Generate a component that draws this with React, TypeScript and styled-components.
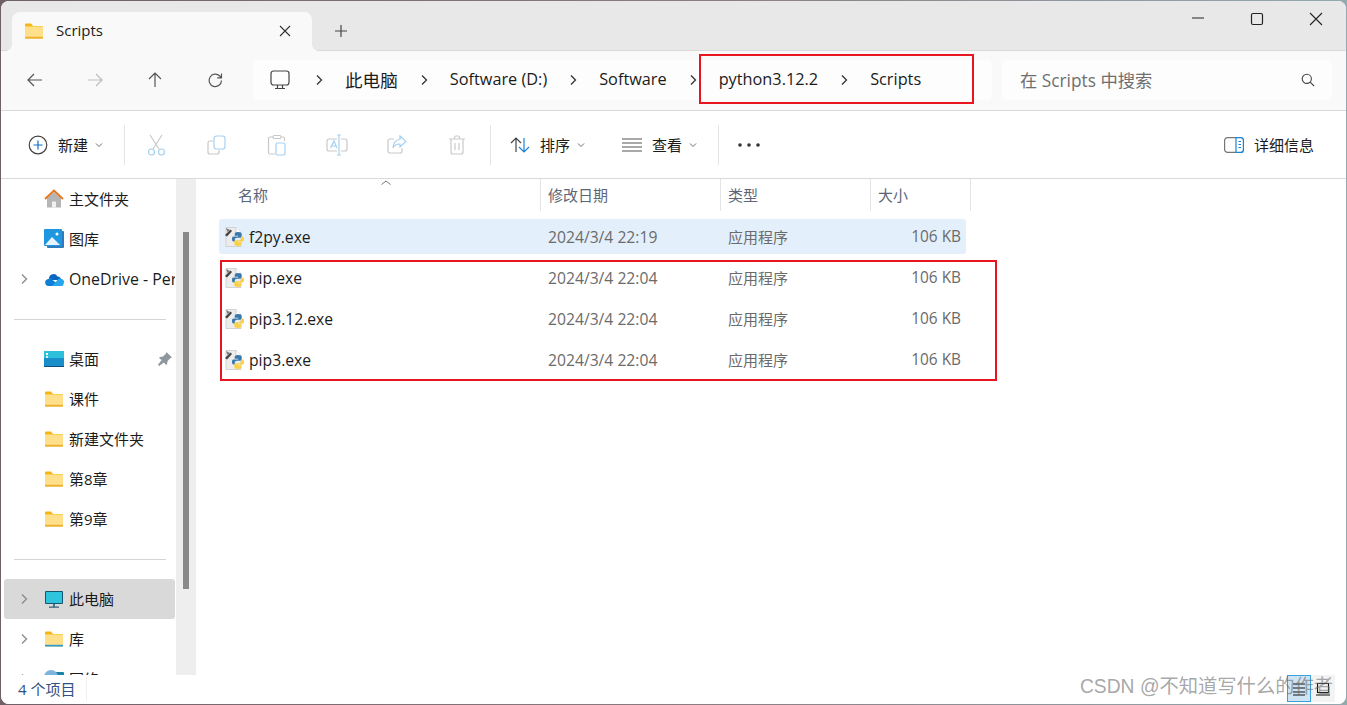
import React from "react";
import styled, { createGlobalStyle } from "styled-components";

const GlobalStyle = createGlobalStyle`
  html, body {
    margin: 0;
    height: 100%;
    overflow: hidden;
  }
  body {
    background: linear-gradient(90deg, #6f5f66 0%, #8a7b80 50%, #93aab0 100%);
    font-family: "Open Sans", "Noto Sans CJK SC", sans-serif;
    color: #1b1b1b;
  }
  * {
    box-sizing: border-box;
  }
`;

const Frame = styled.div`
  position: relative;
  width: 1345px;
  height: 703px;
  margin: 1px;
  display: flex;
  flex-direction: column;
  background: #fff;
  border-radius: 8px;
  overflow: hidden;
`;

/* title bar */
const TitleBar = styled.div`
  height: 50px;
  flex-shrink: 0;
  display: flex;
  align-items: flex-end;
  padding-left: 11px;
  background: #e8e8e8;
  border-bottom: 1px solid #dadada;
`;

const Tab = styled.div`
  position: relative;
  width: 300px;
  height: 39px;
  margin-bottom: -1px;
  display: flex;
  align-items: center;
  padding: 0 12px 2px;
  background: #f9f9f9;
  border-radius: 8px 8px 0 0;
  font-size: 15px;
  &::before,
  &::after {
    content: "";
    position: absolute;
    bottom: 0;
    width: 6px;
    height: 6px;
  }
  &::before {
    left: -6px;
    background: radial-gradient(circle at 0 0, transparent 5.5px, #f9f9f9 6px);
  }
  &::after {
    right: -6px;
    background: radial-gradient(circle at 100% 0, transparent 5.5px, #f9f9f9 6px);
  }
`;

const TabTitle = styled.span`
  flex: 1;
  margin: 0 0 2px 12px;
`;

const NewTab = styled.div`
  width: 58px;
  height: 38px;
  display: flex;
  align-items: center;
  justify-content: center;
`;

const WindowControls = styled.div`
  margin-left: auto;
  align-self: flex-start;
  display: flex;
  padding-right: 1px;
`;

const WindowButton = styled.div`
  width: 59px;
  height: 36px;
  display: flex;
  align-items: center;
  justify-content: center;
`;

/* navigation */
const NavBar = styled.div`
  height: 60px;
  flex-shrink: 0;
  display: flex;
  align-items: center;
  padding: 0 14px 1px 4px;
  background: #f9f9f9;
  border-bottom: 1px solid #d9d9d9;
`;

const NavButton = styled.div`
  width: 60px;
  display: flex;
  justify-content: center;
`;

const AddressBar = styled.div`
  flex: 1;
  height: 40px;
  margin: 0 10px 0 8px;
  display: flex;
  align-items: center;
  gap: 21px;
  padding-left: 17px;
  background: #fdfdfd;
  border-radius: 5px;
  font-size: 16.3px;
`;

const Crumb = styled.span<{ $cjk?: boolean }>`
  margin-bottom: 2px;
  white-space: nowrap;
  font-size: ${(p) => (p.$cjk ? "17.6px" : "inherit")};
`;

const ComputerWrap = styled.span`
  display: flex;
  margin-right: 3px;
`;

const SearchBox = styled.div`
  width: 330px;
  height: 40px;
  display: flex;
  align-items: center;
  justify-content: space-between;
  padding: 0 17px 0 18px;
  background: #fdfdfd;
  border-radius: 5px;
  font-size: 17.3px;
  color: #6f6f6f;
`;

const SearchHint = styled.span`
  margin-bottom: 2px;
`;

/* command bar */
const CommandBar = styled.div`
  height: 68px;
  flex-shrink: 0;
  display: flex;
  align-items: center;
  font-size: 15px;
  background: #fff;
  border-bottom: 1px solid #d9d9d9;
`;

const CommandGroup = styled.div<{ $pad: string; $gap?: number; $end?: boolean }>`
  display: flex;
  align-items: center;
  padding: ${(p) => p.$pad};
  gap: ${(p) => p.$gap ?? 0}px;
  margin-left: ${(p) => (p.$end ? "auto" : "0")};
`;

const CommandItem = styled.div`
  display: flex;
  align-items: center;
  gap: 10px;
`;

const Caret = styled.span`
  display: flex;
  margin-left: -4px;
`;

const CommandIcon = styled.div`
  width: 60px;
  display: flex;
  justify-content: center;
`;

const Divider = styled.div`
  width: 1px;
  height: 40px;
  background: #e5e5e5;
`;

/* body */
const Body = styled.div`
  flex: 1;
  min-height: 0;
  display: flex;
`;

const Sidebar = styled.div`
  width: 175px;
  flex-shrink: 0;
  overflow: hidden;
  font-size: 15px;
`;

const NavRow = styled.div<{ $active?: boolean }>`
  height: 40px;
  margin: 0 1px 0 3px;
  display: flex;
  align-items: center;
  white-space: nowrap;
  overflow: hidden;
  border-radius: 3px;
  background: ${(p) => (p.$active ? "#d9d9d9" : "transparent")};
`;

const NavLabel = styled.span`
  margin-bottom: 2px;
`;

const DriveLabel = styled.span`
  font-size: 15.9px;
`;

const Expander = styled.span`
  width: 40px;
  flex-shrink: 0;
  display: flex;
  justify-content: center;
  padding-right: 1px;
`;

const RowIcon = styled.span`
  width: 20px;
  flex-shrink: 0;
  display: flex;
  margin-right: 5px;
`;

const PinWrap = styled.span`
  margin-left: auto;
  padding-right: 3px;
  display: flex;
`;

const NavRule = styled.div`
  height: 1px;
  margin: 20px 10px 19px 13px;
  background: #d4d4d4;
`;

const ScrollTrack = styled.div`
  width: 20px;
  flex-shrink: 0;
  padding: 53px 7px 0;
  background: #eeeeee;
`;

const ScrollThumb = styled.div`
  width: 6px;
  height: 357px;
  background: #8a8a8a;
`;

const Main = styled.div`
  position: relative;
  flex: 1;
  padding-left: 23px;
  font-size: 15px;
`;

const SortMark = styled.span`
  position: absolute;
  left: 184px;
  top: 0;
  display: flex;
`;

const ListHeader = styled.div`
  display: grid;
  grid-template-columns: 322px 180px 150px 100px;
  height: 32px;
  margin-bottom: 8px;
  color: #5c6678;
`;

const HeaderCell = styled.div<{ $first?: boolean }>`
  display: flex;
  align-items: center;
  padding: 0 0 2px ${(p) => (p.$first ? 19 : 7)}px;
  border-right: 1px solid #e5e5e5;
`;

const FileRows = styled.div`
  width: 747px;
  display: flex;
  flex-direction: column;
  gap: 6px;
`;

const FileRow = styled.div<{ $selected?: boolean }>`
  display: grid;
  grid-template-columns: 322px 180px 150px 95px;
  height: 35px;
  align-items: center;
  border-radius: 3px;
  color: #6b6b6b;
  background: ${(p) => (p.$selected ? "#e3f0fb" : "transparent")};
`;

const NameCell = styled.div`
  display: flex;
  align-items: center;
  gap: 5px;
  padding-left: 5px;
  font-size: 15.7px;
  color: #1b1b1b;
`;

const DateCell = styled.div`
  padding-left: 7px;
  font-size: 15.7px;
  white-space: nowrap;
`;

const TypeCell = styled.div`
  padding-left: 7px;
  margin-bottom: 1px;
  white-space: nowrap;
`;

const SizeCell = styled.div`
  padding-right: 5px;
  font-size: 15.4px;
  text-align: right;
  white-space: nowrap;
`;

/* status bar */
const StatusBar = styled.div`
  height: 29px;
  flex-shrink: 0;
  display: flex;
  align-items: flex-start;
  padding: 2px 0 0 17px;
  font-size: 15px;
  color: #33507e;
  background: #fff;
`;

const StatusText = styled.span`
  padding-right: 11px;
  border-right: 1px solid #efefef;
  line-height: 24px;
`;

const ViewSwitch = styled.div`
  margin-left: auto;
  margin-right: 11px;
  display: flex;
`;

const ViewButton = styled.div<{ $on?: boolean }>`
  width: 24px;
  height: 27px;
  margin-top: -2px;
  display: flex;
  align-items: center;
  justify-content: center;
  background: ${(p) => (p.$on ? "#cfe4f3" : "#f3f3f3")};
  border: 1px solid ${(p) => (p.$on ? "#3aa0dc" : "transparent")};
`;

/* overlays */
const Highlight = styled.div<{ $x: number; $y: number; $w: number; $h: number }>`
  position: absolute;
  left: ${(p) => p.$x}px;
  top: ${(p) => p.$y}px;
  width: ${(p) => p.$w}px;
  height: ${(p) => p.$h}px;
  border: 2px solid #e8141f;
  pointer-events: none;
`;

const Watermark = styled.div`
  position: absolute;
  right: 13px;
  bottom: 4px;
  font-family: "Liberation Sans", "Noto Sans CJK SC", sans-serif;
  font-size: 19.3px;
  line-height: 26px;
  color: rgba(110, 110, 110, 0.62);
  white-space: nowrap;
`;

/* icons */
const Chev = ({ color = "#333" }: { color?: string }) => (
  <svg width={10} height={12} viewBox="0 0 10 12" fill="none" stroke={color} strokeWidth="1.3">
    <path d="M3 1.5 7.5 6 3 10.5" />
  </svg>
);

const Down = () => (
  <svg width="10" height="8" viewBox="0 0 10 8" fill="none" stroke="#6e6e6e" strokeWidth="1">
    <path d="M2 2.500 5 5.500 8 2.500" />
  </svg>
);

const Folder = ({ stripe }: { stripe?: boolean }) => (
  <svg width="20" height="16" viewBox="0 0 20 16">
    <path d="M1 1.500A1 1 0 0 1 2 .5h5l2 2.500H1z" fill="#f6b417" />
    <rect x="1" y="3" width="18" height="12.500" rx="1" fill="#fbc02f" />
    <rect x="1" y="3.600" width="18" height="11" fill="#ffe08a" />
    <rect x="1" y="13.800" width="18" height="1.700" fill={stripe ? "#2e9bd8" : "#edb02c"} />
  </svg>
);

const snake =
  "M14 5c-2.200 0-3.300.7-3.300 2v1.800h3.500v.7H9.500C8.200 9.500 8 10.800 8 12s.3 2.500 1.500 2.500h1.300v-1.700c0-1.200 1-2.100 2.200-2.100h3c1 0 1.700-.8 1.700-1.700V7c0-1.300-1.300-2-3.700-2z";

const PyIcon = () => (
  <svg width="20" height="20" viewBox="0 0 20 20">
    <path d="M2 .5h10l5 5V19.500H2z" fill="#ececec" stroke="#c4c4c4" strokeWidth="0.7" />
    <path d="M12 .5v5h5" fill="#fff" stroke="#c4c4c4" strokeWidth="0.7" />
    <path d={snake} fill="#3a79ae" />
    <path d={snake} fill="#fbd044" transform="rotate(180 14 12)" />
    <path d="M1 8 6.500 2.500 8 4 3 9.500z" fill="#444" />
    <path d="M2 1 3.500 5 6 3z" fill="#7a7a7a" />
  </svg>
);

const PcIcon = () => (
  <svg width="20" height="20" viewBox="0 0 20 20">
    <rect x="1" y="2" width="18" height="13" rx="1" fill="#16556f" />
    <rect x="2" y="3" width="16" height="11" fill="#2fc4dd" />
    <rect x="9" y="15" width="2" height="3" fill="#3d7c94" />
    <rect x="5" y="17.500" width="10" height="1.300" fill="#3d6478" />
  </svg>
);

const files = [
  { name: "f2py.exe", date: "2024/3/4 22:19", selected: true },
  { name: "pip.exe", date: "2024/3/4 22:04" },
  { name: "pip3.12.exe", date: "2024/3/4 22:04" },
  { name: "pip3.exe", date: "2024/3/4 22:04" },
];

const line = { fill: "none", stroke: "#555", strokeWidth: 1.2 };
const faint = { fill: "none", stroke: "#c9c9c9", strokeWidth: 1.2 };
const tint = { fill: "none", stroke: "#a6d0f0", strokeWidth: 1.2 };

export default function App() {
  return (
    <>
      <GlobalStyle />
      <Frame>
        <TitleBar>
          <Tab>
            <Folder />
            <TabTitle>Scripts</TabTitle>
            <svg width="14" height="14" viewBox="0 0 14 14" fill="none" stroke="#333" strokeWidth="1.1" style={{ marginRight: 8 }}>
              <path d="M2 2 12 12M12 2 2 12" />
            </svg>
          </Tab>
          <NewTab>
            <svg width="14" height="14" viewBox="0 0 14 14" fill="none" stroke="#444" strokeWidth="1.2">
              <path d="M7 1v12M1 7h12" />
            </svg>
          </NewTab>
          <WindowControls>
            <WindowButton>
              <svg width="14" height="14" viewBox="0 0 14 14" stroke="#222" strokeWidth="1.2">
                <path d="M1 6h12" />
              </svg>
            </WindowButton>
            <WindowButton>
              <svg width="14" height="14" viewBox="0 0 14 14" fill="none" stroke="#222" strokeWidth="1.2">
                <rect x="1.500" y="1.500" width="11" height="11" rx="1.500" />
              </svg>
            </WindowButton>
            <WindowButton>
              <svg width="14" height="14" viewBox="0 0 14 14" fill="none" stroke="#222" strokeWidth="1.1">
                <path d="M1 1 13 13M13 1 1 13" />
              </svg>
            </WindowButton>
          </WindowControls>
        </TitleBar>

        <NavBar>
          <NavButton>
            <svg width="18" height="16" viewBox="0 0 18 16" {...line}>
              <path d="M16 8H2M8 2 2 8l6 6" />
            </svg>
          </NavButton>
          <NavButton>
            <svg width="18" height="16" viewBox="0 0 18 16" fill="none" stroke="#bdbdbd" strokeWidth="1.2">
              <path d="M2 8h14M10 2l6 6-6 6" />
            </svg>
          </NavButton>
          <NavButton>
            <svg width="16" height="18" viewBox="0 0 16 18" {...line}>
              <path d="M8 16V2M2 8l6-6 6 6" />
            </svg>
          </NavButton>
          <NavButton>
            <svg width="17" height="17" viewBox="0 0 17 17" {...line}>
              <path d="M14.500 8.500A6.200 6.200 0 1 1 12.700 4L14.500 5.800M14.500 1.500v4.300H10.200" />
            </svg>
          </NavButton>
          <AddressBar>
            <ComputerWrap>
              <svg width="20" height="20" viewBox="0 0 20 20" fill="none" stroke="#444" strokeWidth="1.2">
                <rect x="1" y="1" width="18" height="14" rx="2.500" />
                <path d="M7.500 15v3M12.500 15v3M5 18.500h10" />
              </svg>
            </ComputerWrap>
            <Chev />
            <Crumb $cjk>此电脑</Crumb>
            <Chev />
            <Crumb>Software (D:)</Crumb>
            <Chev />
            <Crumb>Software</Crumb>
            <Chev />
            <Crumb>python3.12.2</Crumb>
            <Chev />
            <Crumb>Scripts</Crumb>
          </AddressBar>
          <SearchBox>
            <SearchHint>在 Scripts 中搜索</SearchHint>
            <svg width="14" height="14" viewBox="0 0 14 14" fill="none" stroke="#444" strokeWidth="1.1">
              <circle cx="5.800" cy="5.800" r="4.600" />
              <path d="M9.200 9.200 13 13" />
            </svg>
          </SearchBox>
        </NavBar>

        <CommandBar>
          <CommandGroup $pad="0 20px 0 27px">
            <CommandItem>
              <svg width="20" height="20" viewBox="0 0 20 20" fill="none" strokeWidth="1.2">
                <circle cx="10" cy="10" r="8.800" stroke="#444" />
                <path d="M10 5.500v9M5.500 10h9" stroke="#0f6fc4" />
              </svg>
              新建
              <Caret>
                <Down />
              </Caret>
            </CommandItem>
          </CommandGroup>
          <Divider />
          <CommandGroup $pad="0 3px 0 2px">
            <CommandIcon>
              <svg width="20" height="22" viewBox="0 0 20 22" fill="none" strokeWidth="1.1">
                <path d="M3 1l9 14M15 1 6 15" stroke="#c6c6c6" />
                <circle cx="4.500" cy="18" r="3" {...tint} />
                <circle cx="14.500" cy="18" r="3" {...tint} />
              </svg>
            </CommandIcon>
            <CommandIcon>
              <svg width="20" height="20" viewBox="0 0 20 20">
                <path d="M6 6H3a2 2 0 0 0-2 2v9a2 2 0 0 0 2 2h7a2 2 0 0 0 2-2v-2" {...faint} />
                <rect x="7" y="1" width="11" height="13" rx="2.500" {...tint} />
              </svg>
            </CommandIcon>
            <CommandIcon>
              <svg width="20" height="22" viewBox="0 0 20 22">
                <path d="M6 3H3a1.500 1.500 0 0 0-1.500 1.500v14A1.500 1.500 0 0 0 3 20h5M14 3h2a1.500 1.500 0 0 1 1.500 1.500V7" {...faint} />
                <rect x="6" y="1.500" width="8" height="3" rx="1.200" {...faint} />
                <rect x="9" y="9" width="9" height="12" rx="1.500" {...tint} />
              </svg>
            </CommandIcon>
            <CommandIcon>
              <svg width="22" height="22" viewBox="0 0 22 22">
                <path d="M11 5H3a2 2 0 0 0-2 2v8a2 2 0 0 0 2 2h8M15 5h4a2 2 0 0 1 2 2v8a2 2 0 0 1-2 2h-4" {...faint} />
                <path d="M13 1v20M11 1h4M11 21h4M4.500 14 8 7l3 7M5.500 12h4.500" {...tint} />
              </svg>
            </CommandIcon>
            <CommandIcon>
              <svg width="20" height="20" viewBox="0 0 20 20">
                <path d="M7 4H3a2 2 0 0 0-2 2v10a2 2 0 0 0 2 2h10a2 2 0 0 0 2-2v-3" {...faint} />
                <path d="M13 1l6 5.500-6 5.500V9C9 9 7 10.500 6 13c0-5 3-8.500 7-8.500z" {...tint} />
              </svg>
            </CommandIcon>
            <CommandIcon>
              <svg width="18" height="20" viewBox="0 0 18 20" {...faint}>
                <path d="M1 4h16M6.500 4V2.500a1.500 1.500 0 0 1 1.500-1.500h2a1.500 1.500 0 0 1 1.500 1.500V4M3 4v13a2 2 0 0 0 2 2h8a2 2 0 0 0 2-2V4M7 8v7M11 8v7" />
              </svg>
            </CommandIcon>
          </CommandGroup>
          <Divider />
          <CommandGroup $pad="0 20px 0 19px" $gap={36}>
            <CommandItem>
              <svg width="20" height="20" viewBox="0 0 20 20" fill="none" strokeWidth="1.2">
                <path d="M6 17V3M1 8l5-5 5 5" stroke="#444" />
                <path d="M14 3v14M9 12l5 5 5-5" stroke="#1a83d4" />
              </svg>
              排序
              <Caret>
                <Down />
              </Caret>
            </CommandItem>
            <CommandItem>
              <svg width="20" height="14" viewBox="0 0 20 14" stroke="#555" strokeWidth="1.2">
                <path d="M0 1h20M0 5h20M0 9h20M0 13h20" />
              </svg>
              查看
              <Caret>
                <Down />
              </Caret>
            </CommandItem>
          </CommandGroup>
          <Divider />
          <CommandGroup $pad="0 0 0 19px">
            <svg width="22" height="4" viewBox="0 0 22 4" fill="#333">
              <circle cx="2" cy="2" r="1.800" />
              <circle cx="11" cy="2" r="1.800" />
              <circle cx="20" cy="2" r="1.800" />
            </svg>
          </CommandGroup>
          <CommandGroup $pad="0 32px 0 0" $end>
            <CommandItem>
              <svg width="20" height="16" viewBox="0 0 20 16">
                <rect x="0.600" y="0.600" width="18.800" height="14.800" rx="3" fill="#fff" stroke="#777" strokeWidth="1.200" />
                <path d="M12 .6h4.400a3 3 0 0 1 3 3v8.800a3 3 0 0 1-3 3H12z" fill="#fff" stroke="#1a83d4" strokeWidth="1.200" />
                <path d="M14.500 4.500h2.500M14.500 7.500h2.500M14.500 10.500h2.500" stroke="#1a83d4" strokeWidth="1.200" />
              </svg>
              详细信息
            </CommandItem>
          </CommandGroup>
        </CommandBar>

        <Body>
          <Sidebar>
            <NavRow>
              <Expander />
              <RowIcon>
                <svg width="20" height="20" viewBox="0 0 20 20">
                  <path d="M3 9v9.500h14V9L10 3z" fill="#b5b5b5" />
                  <rect x="8" y="12.500" width="4" height="6" fill="#f0f0f0" />
                  <path d="M1 10 10 1.500 19 10" fill="none" stroke="#e8761b" strokeWidth="1.800" />
                </svg>
              </RowIcon>
              <NavLabel>主文件夹</NavLabel>
            </NavRow>
            <NavRow>
              <Expander />
              <RowIcon>
                <svg width="20" height="20" viewBox="0 0 20 20">
                  <rect x="3" y="2" width="17" height="17" rx="1" fill="#2f79bd" />
                  <rect x="0" y="0" width="18" height="17" rx="1" fill="#1e97e0" />
                  <path d="M1 16 8 8l8 8z" fill="#e8f4fc" />
                  <circle cx="13" cy="5" r="1.500" fill="#fff" />
                </svg>
              </RowIcon>
              <NavLabel>图库</NavLabel>
            </NavRow>
            <NavRow>
              <Expander>
                <Chev color="#8a8a8a" />
              </Expander>
              <RowIcon>
                <svg width="20" height="14" viewBox="0 0 20 14">
                  <path d="M5 6.500a4.500 4.500 0 0 1 8.500-2A3.500 3.500 0 0 1 17 8H6z" fill="#0b66c2" />
                  <path d="M4.500 14A3.500 3.500 0 0 1 3.500 7.200a4 4 0 0 1 5 .8l8 6z" fill="#0f7fd6" />
                  <path d="M8 14l5-5.500a3.500 3.500 0 0 1 6.500 3.500c0 1-.5 2-1.500 2z" fill="#2aa7ea" />
                </svg>
              </RowIcon>
              <DriveLabel>OneDrive - Personal</DriveLabel>
            </NavRow>
            <NavRule />
            <NavRow>
              <Expander />
              <RowIcon>
                <svg width="20" height="16" viewBox="0 0 20 16">
                  <rect x="0" y="0" width="20" height="16" rx="1" fill="#1a8ec9" />
                  <rect x="0" y="0" width="20" height="7" fill="#2cc0da" />
                  <rect x="0" y="15" width="20" height="1" fill="#12507e" />
                  <rect x="2" y="2" width="2" height="2" fill="#fff" />
                  <rect x="2" y="5" width="2" height="2" fill="#d8f0f8" />
                </svg>
              </RowIcon>
              <NavLabel>桌面</NavLabel>
              <PinWrap>
                <svg width="14" height="14" viewBox="0 0 14 14" fill="#8f979e">
                  <path d="M8.500 0 14 5.500l-1.400.6-3 3-.5 3-1 .9-2.200-2.600L1.200 14 0 12.800l3.600-4.700L1 6l1-1 3-.5 3-3z" />
                </svg>
              </PinWrap>
            </NavRow>
            <NavRow>
              <Expander />
              <RowIcon>
                <Folder />
              </RowIcon>
              <NavLabel>课件</NavLabel>
            </NavRow>
            <NavRow>
              <Expander />
              <RowIcon>
                <Folder />
              </RowIcon>
              <NavLabel>新建文件夹</NavLabel>
            </NavRow>
            <NavRow>
              <Expander />
              <RowIcon>
                <Folder />
              </RowIcon>
              <NavLabel>第8章</NavLabel>
            </NavRow>
            <NavRow>
              <Expander />
              <RowIcon>
                <Folder />
              </RowIcon>
              <NavLabel>第9章</NavLabel>
            </NavRow>
            <NavRule />
            <NavRow $active>
              <Expander>
                <Chev color="#8a8a8a" />
              </Expander>
              <RowIcon>
                <PcIcon />
              </RowIcon>
              <NavLabel>此电脑</NavLabel>
            </NavRow>
            <NavRow>
              <Expander>
                <Chev color="#8a8a8a" />
              </Expander>
              <RowIcon>
                <Folder stripe />
              </RowIcon>
              <NavLabel>库</NavLabel>
            </NavRow>
            <NavRow>
              <Expander>
                <Chev color="#8a8a8a" />
              </Expander>
              <RowIcon>
                <svg width="20" height="20" viewBox="0 0 20 20">
                  <rect x="6" y="3" width="14" height="11" rx="1" fill="#1c83a8" />
                  <circle cx="7" cy="8" r="7" fill="#7fb5dc" />
                </svg>
              </RowIcon>
              <NavLabel>网络</NavLabel>
            </NavRow>
          </Sidebar>
          <ScrollTrack>
            <ScrollThumb />
          </ScrollTrack>
          <Main>
            <SortMark>
              <svg width="12" height="8" viewBox="0 0 12 8" fill="none" stroke="#777" strokeWidth="1">
                <path d="M1.500 5.500 6 2l4.500 3.500" />
              </svg>
            </SortMark>
            <ListHeader>
              <HeaderCell $first>名称</HeaderCell>
              <HeaderCell>修改日期</HeaderCell>
              <HeaderCell>类型</HeaderCell>
              <HeaderCell>大小</HeaderCell>
            </ListHeader>
            <FileRows>
              {files.map((f) => (
                <FileRow key={f.name} $selected={f.selected}>
                  <NameCell>
                    <PyIcon />
                    {f.name}
                  </NameCell>
                  <DateCell>{f.date}</DateCell>
                  <TypeCell>应用程序</TypeCell>
                  <SizeCell>106 KB</SizeCell>
                </FileRow>
              ))}
            </FileRows>
          </Main>
        </Body>

        <StatusBar>
          <StatusText>4 个项目</StatusText>
          <ViewSwitch>
            <ViewButton $on>
              <svg width="14" height="14" viewBox="0 0 14 14" stroke="#111" strokeWidth="1.100">
                <path d="M1 2h12M1 6h12M1 10h12M1 13h12" />
              </svg>
            </ViewButton>
            <ViewButton>
              <svg width="14" height="14" viewBox="0 0 14 14" fill="none" stroke="#111" strokeWidth="1.100">
                <rect x="1.500" y="1.500" width="11" height="9" />
                <path d="M0 13h14" />
              </svg>
            </ViewButton>
          </ViewSwitch>
        </StatusBar>

        <Highlight $x={698} $y={53} $w={275} $h={50} />
        <Highlight $x={219} $y={259} $w={777} $h={121} />
        <Watermark>CSDN @不知道写什么的作者</Watermark>
      </Frame>
    </>
  );
}
